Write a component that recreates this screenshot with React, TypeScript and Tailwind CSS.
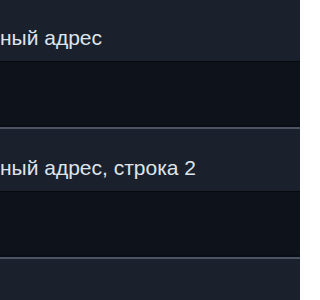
import React from 'react'

const fields = ['Платежный адрес', 'Платежный адрес, строка 2']

const Field: React.FC<{ label: string }> = ({ label }) => {
  // the page is scrolled sideways: the label starts just before the left edge
  const head = label.slice(0, 6)
  const tail = label.slice(6)
  return (
    <div className="pt-[26px] pb-[1px]">
      <div className="flex whitespace-nowrap text-[21px] leading-[24px] text-[#dfe4ea]">
        <div className="flex w-0 justify-end">
          <span className="shrink-0">{head}</span>
        </div>
        <span>{tail}</span>
      </div>
      <div className="mt-[11px] h-[68px] border-t border-b-2 border-t-[#07090d] border-b-[#4b5462] bg-[#0e121a] shadow-[inset_0_-2px_0_#0a0d13]" />
    </div>
  )
}

export default function App() {
  return (
    <div className="h-[300px] w-[300px] overflow-hidden bg-[#1a212d] font-['Liberation_Sans',Arial,sans-serif]">
      {fields.map((f) => (
        <Field key={f} label={f} />
      ))}
    </div>
  )
}
